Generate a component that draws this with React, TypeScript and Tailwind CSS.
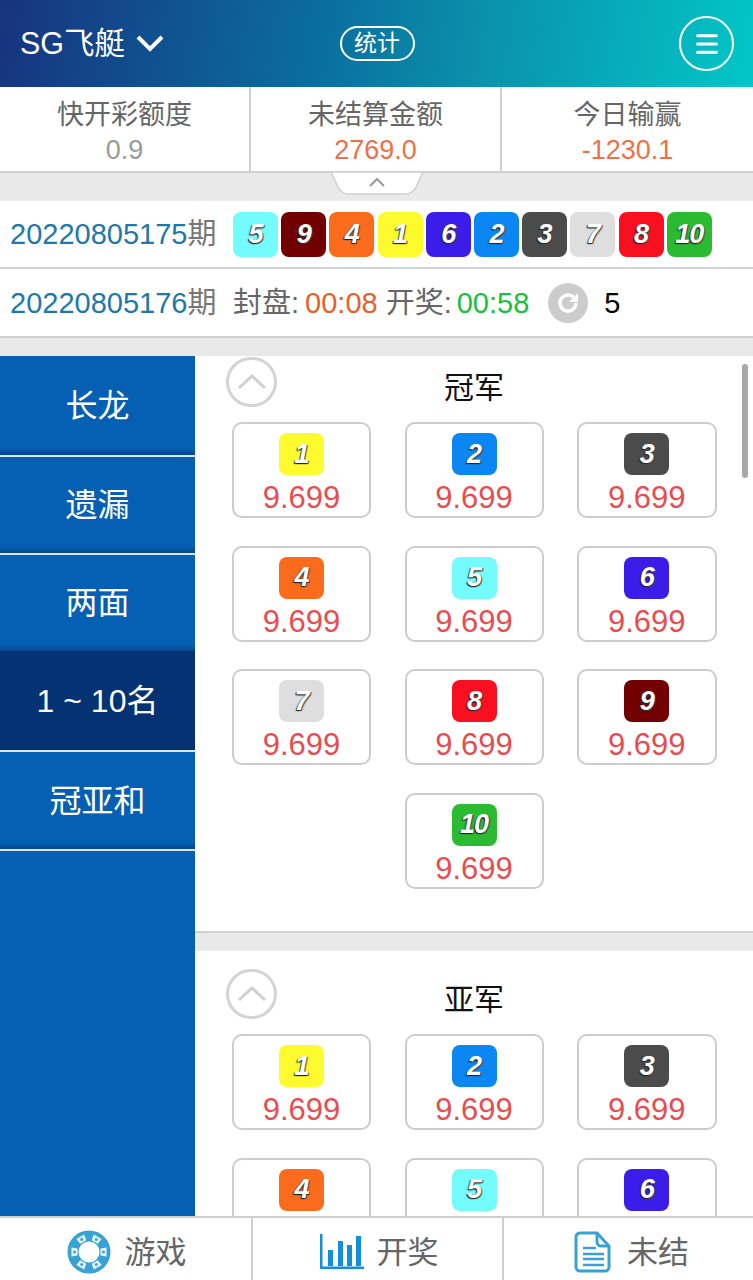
import { Menu } from "lucide-react";

const FONT = "font-['Liberation_Sans','Noto_Sans_CJK_SC',sans-serif]";

const BALL_COLORS: Record<number, string> = {
  1: "bg-[#fdfb2d]",
  2: "bg-[#0a87f2]",
  3: "bg-[#4b4b4b]",
  4: "bg-[#fb6b1c]",
  5: "bg-[#74fbfb]",
  6: "bg-[#3c1ce8]",
  7: "bg-[#dedede]",
  8: "bg-[#f80f20]",
  9: "bg-[#730000]",
  10: "bg-[#2bbb31]",
};

const LAST_DRAW = [5, 9, 4, 1, 6, 2, 3, 7, 8, 10];

const NAV = [
  { label: "长龙", cls: "h-[101px] border-b-2 border-b-[#d5e6f6]" },
  { label: "遗漏", cls: "h-[98px] border-b-2 border-b-[#d5e6f6]" },
  { label: "两面", cls: "h-[96px]" },
  { label: "1 ~ 10名", cls: "h-[101px] border-b-2 border-b-[#d5e6f6]", active: true },
  { label: "冠亚和", cls: "h-[99px] border-b-2 border-b-[#d5e6f6]" },
];

function Ball({ n }: { n: number }) {
  return (
    <div className={`flex h-[45px] w-[45px] items-center justify-center rounded-lg ${BALL_COLORS[n]}`}>
      <span className="text-[27px] leading-none font-bold italic tracking-[-1px] text-white [text-shadow:-1px_1px_1px_#222,1px_1px_1px_#444]">
        {n}
      </span>
    </div>
  );
}

function OddsCard({ n, className = "" }: { n: number; className?: string }) {
  return (
    <div
      className={`flex h-[96px] flex-col items-center rounded-[10px] border-2 border-[#cccccc] pt-[9px] ${className}`}
    >
      <Ball n={n} />
      <span className="mt-[5px] text-[31px] leading-[36px] text-[#e84c50]">9.699</span>
    </div>
  );
}

function Section({ title, second }: { title: string; second?: boolean }) {
  return (
    <section className={`bg-white ${second ? "pt-[17px]" : "h-[577px] border-b-2 border-[#d2d2d2]"}`}>
      <div className="relative h-[66px] pt-[12px] text-center text-[30px] leading-[40px] text-[#111]">
        <div className="absolute top-px left-[31px] flex h-[50px] w-[51px] items-center justify-center rounded-full border-[3px] border-[#d4d4d4]">
          <svg width="32" height="20" viewBox="0 0 32 20" fill="none" stroke="#d0d0d0" strokeWidth="3">
            <path d="M3 16 16 4l13 12" />
          </svg>
        </div>
        {title}
      </div>
      <div className="grid grid-cols-[139px_139px_139.5px] gap-x-[33.5px] gap-y-[27.6px] pl-[37px]">
        {[1, 2, 3, 4, 5, 6, 7, 8, 9].map((n) => (
          <OddsCard key={n} n={n} />
        ))}
        {!second && <OddsCard n={10} className="col-start-2" />}
      </div>
    </section>
  );
}

function ChipIcon() {
  return (
    <svg width="44" height="44" viewBox="0 0 44 44">
      <circle cx="22" cy="22" r="16" fill="none" stroke="#38a3d3" strokeWidth="11" />
      {[30, 90, 150, 210, 270, 330].map((a) => (
        <g key={a} transform={`rotate(${a} 22 22)`}>
          <path d="M17.5 4.5h9l-1 6h-7z" fill="#e8f5fb" />
          <circle cx="22" cy="7.5" r="1.5" fill="#38a3d3" />
        </g>
      ))}
    </svg>
  );
}

function ChartIcon() {
  return (
    <svg width="46" height="36" viewBox="0 0 46 36" fill="#0f8fdc">
      <path d="M1 0h2.5v32.5H45V35H1z" />
      <rect x="9" y="16" width="5" height="16" />
      <rect x="19" y="7" width="5" height="25" />
      <rect x="28" y="11" width="5" height="21" />
      <rect x="37" y="2" width="5" height="30" />
    </svg>
  );
}

function DocIcon() {
  return (
    <svg width="40" height="42" viewBox="0 0 40 42" fill="none" stroke="#38a3d3" strokeWidth="3">
      <path d="M8 2h17l12 13v21a4 4 0 0 1-4 4H8a4 4 0 0 1-4-4V6a4 4 0 0 1 4-4z" />
      <path d="M25 2v9a4 4 0 0 0 4 4h8" />
      <path d="M11 17h13M11 23h21M11 28h21M11 34h21" strokeWidth="2.5" />
    </svg>
  );
}

export default function App() {
  return (
    <div className={`flex h-[1280px] w-[753px] flex-col overflow-hidden bg-white ${FONT}`}>
      <header className="grid h-[87px] shrink-0 grid-cols-[1fr_auto_1fr] items-center bg-[linear-gradient(100deg,#17337f_0%,#0a6d9f_42%,#0a93ac_65%,#02c6c7_100%)] pr-[19px] pl-[20px] text-white">
        <div className="flex items-center gap-[11px]">
          <span className="text-[30.5px] leading-none">SG飞艇</span>
          <svg width="28" height="18" viewBox="0 0 28 18" fill="none" stroke="#fff" strokeWidth="4">
            <path d="M2 2l12 12L26 2" />
          </svg>
        </div>
        <div className="flex h-[35px] w-[75px] items-center justify-center rounded-full border-2 border-white text-[23px] leading-none">
          统计
        </div>
        <div className="flex h-[55px] w-[55px] items-center justify-center justify-self-end rounded-full border-2 border-white">
          <Menu size={28} strokeWidth={2.6} />
        </div>
      </header>

      <div className="grid h-[86px] shrink-0 grid-cols-[251px_251px_251px] border-b-2 border-[#cfcfcf] text-center">
        {[
          { label: "快开彩额度", value: "0.9", color: "text-[#9a9a9a]" },
          { label: "未结算金额", value: "2769.0", color: "text-[#ef7048]" },
          { label: "今日输赢", value: "-1230.1", color: "text-[#ef7048]" },
        ].map((s, i) => (
          <div key={s.label} className={`pt-[10px] ${i < 2 ? "border-r-2 border-[#cfcfcf]" : ""}`}>
            <div className="text-[27px] leading-[36px] text-[#666]">{s.label}</div>
            <div className={`mt-[1px] text-[27px] leading-[32px] ${s.color}`}>{s.value}</div>
          </div>
        ))}
      </div>

      <div className="relative h-[28px] shrink-0 bg-[#e9e9e9]">
        <svg className="absolute top-[-1px] left-[330px]" width="94" height="24" viewBox="0 0 94 24">
          <path d="M1 0l7 15q4 7 11 7h56q7 0 11-7l7-15z" fill="#fff" stroke="#cfcfcf" strokeWidth="1.5" />
          <path d="M40 14l7-7 7 7" fill="none" stroke="#9a9a9a" strokeWidth="2" />
        </svg>
      </div>

      <div className="flex h-[68px] shrink-0 items-center border-b-2 border-[#d0d0d8] pl-[10px]">
        <span className="w-[223px] text-[29px] leading-none text-[#1e78a8]">
          20220805175<span className="text-[#777]">期</span>
        </span>
        <div className="flex gap-[3.2px]">
          {LAST_DRAW.map((n) => (
            <Ball key={n} n={n} />
          ))}
        </div>
      </div>

      <div className="flex h-[69px] shrink-0 items-center border-b-2 border-[#d2d2d2] pl-[10px] text-[29px] leading-none">
        <span className="mt-[2px] w-[223px] text-[#1e78a8]">
          20220805176<span className="text-[#777]">期</span>
        </span>
        <span className="mt-[2px] text-[#666]">封盘:</span>
        <span className="mt-[2px] ml-[6px] text-[#e8602c]">00:08</span>
        <span className="mt-[2px] ml-[8px] text-[#666]">开奖:</span>
        <span className="mt-[2px] ml-[5px] text-[#18c040]">00:58</span>
        <div className="ml-[19px] flex h-[40px] w-[40px] items-center justify-center rounded-full bg-[#cccccc]">
          <svg width="28" height="28" viewBox="0 0 28 28" fill="none">
            <path d="M22 14a8 8 0 1 1-2.6-5.9" stroke="#fff" strokeWidth="3.5" />
            <path d="M24 4v9h-9z" fill="#fff" />
          </svg>
        </div>
        <span className="mt-[2px] ml-[16px] text-black">5</span>
      </div>

      <div className="h-[18px] shrink-0 bg-[#e9e9e9]" />

      <main className="relative flex min-h-0 flex-1">
        <nav className="h-full w-[195px] shrink-0 bg-[#0560b3]">
          {NAV.map((item) => (
            <div
              key={item.label}
              className={`flex items-center justify-center text-[32px] leading-none text-white ${item.cls} ${
                item.active
                  ? "bg-[#053273]"
                  : "bg-[linear-gradient(to_bottom,#0560b3_93%,#04488f_100%)]"
              }`}
            >
              {item.label}
            </div>
          ))}
        </nav>
        <div className="min-w-0 flex-1 overflow-hidden">
          <Section title="冠军" />
          <div className="h-[18px] bg-[#e9e9e9]" />
          <Section title="亚军" second />
        </div>
        <div className="absolute top-[8px] right-[5px] h-[114px] w-[6px] rounded-full bg-[#a8a8a8]" />
      </main>

      <footer className="grid h-[64px] shrink-0 grid-cols-[253px_251px_249px] border-t-2 border-[#cfcfcf] bg-white text-[31px] leading-none text-[#666]">
        <div className="flex items-center justify-center gap-[14px] border-r-2 border-[#cfcfcf] pt-[6px] pl-[2px]">
          <ChipIcon />
          游戏
        </div>
        <div className="flex items-center justify-center gap-[12px] border-r-2 border-[#cfcfcf] pt-[6px] pl-[2px]">
          <ChartIcon />
          开奖
        </div>
        <div className="flex items-center justify-center gap-[15px] pt-[6px] pl-[4px]">
          <DocIcon />
          未结
        </div>
      </footer>
    </div>
  );
}
